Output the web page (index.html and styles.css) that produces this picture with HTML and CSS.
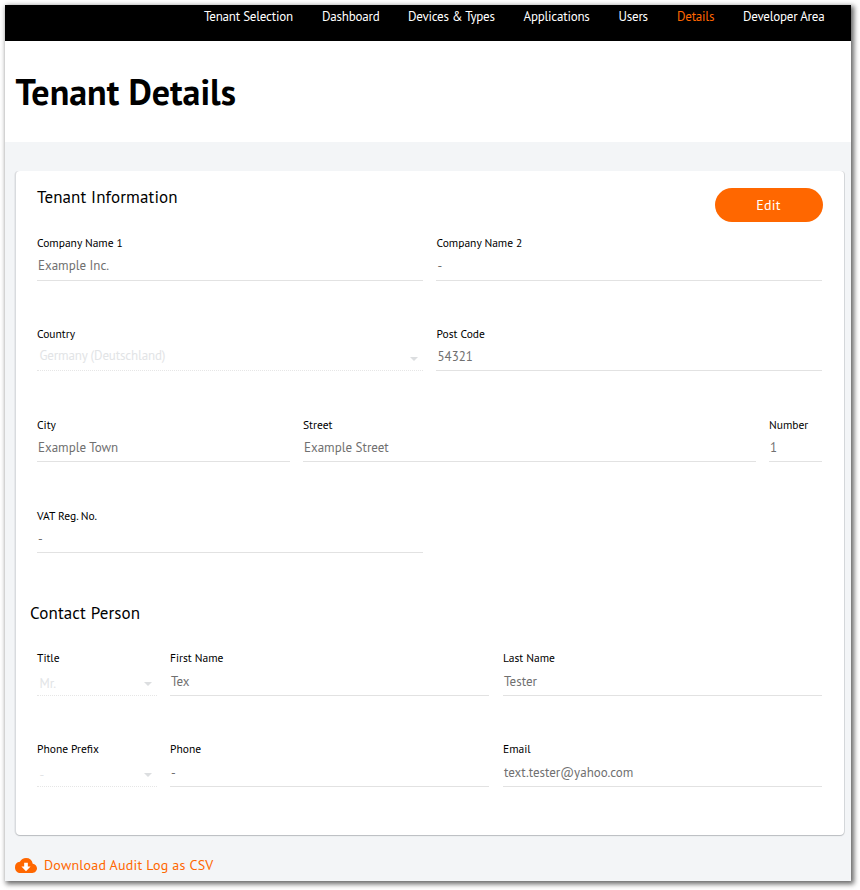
FILE: index.html
```html
<!DOCTYPE html>
<html lang="en">
<head>
<meta charset="utf-8">
<title>Tenant Details</title>
<link rel="stylesheet" href="styles.css">
</head>
<body>
<div class="window">
  <nav class="nav">
    <a>Tenant Selection</a><a>Dashboard</a><a>Devices &amp; Types</a><a>Applications</a><a>Users</a><a class="active">Details</a><a>Developer Area</a>
  </nav>
  <header class="hero"><h1>Tenant Details</h1></header>
  <main class="content">
    <section class="card">
      <div class="card-head"><h2>Tenant Information</h2><button class="edit">Edit</button></div>
      <div class="row halves first">
        <div class="field"><label>Company Name 1</label><div class="value">Example Inc.</div></div>
        <div class="field"><label>Company Name 2</label><div class="value">-</div></div>
      </div>
      <div class="row halves">
        <div class="field"><label>Country</label><div class="value select">Germany (Deutschland)</div></div>
        <div class="field"><label>Post Code</label><div class="value">54321</div></div>
      </div>
      <div class="row address">
        <div class="field"><label>City</label><div class="value">Example Town</div></div>
        <div class="field"><label>Street</label><div class="value">Example Street</div></div>
        <div class="field"><label>Number</label><div class="value">1</div></div>
      </div>
      <div class="row halves">
        <div class="field"><label>VAT Reg. No.</label><div class="value">-</div></div>
      </div>
      <h2 class="contact-title">Contact Person</h2>
      <div class="row contact">
        <div class="field"><label>Title</label><div class="value select">Mr.</div></div>
        <div class="field"><label>First Name</label><div class="value">Tex</div></div>
        <div class="field"><label>Last Name</label><div class="value">Tester</div></div>
      </div>
      <div class="row contact">
        <div class="field"><label>Phone Prefix</label><div class="value select">-</div></div>
        <div class="field"><label>Phone</label><div class="value">-</div></div>
        <div class="field"><label>Email</label><div class="value">text.tester@yahoo.com</div></div>
      </div>
    </section>
    <a class="download">
      <svg viewBox="0 0 24 16" width="22" height="15" preserveAspectRatio="none"><path fill="#ff6700" d="M19.35 6.04A7.49 7.49 0 0 0 12 0C9.11 0 6.6 1.64 5.35 4.04A5.994 5.994 0 0 0 0 10c0 3.31 2.69 6 6 6h13c2.76 0 5-2.24 5-5 0-2.64-2.05-4.78-4.65-4.96z"/><path fill="#fff" d="M17 9l-5 5-5-5h3V5h4v4z"/></svg>
      <span>Download Audit Log as CSV</span>
    </a>
  </main>
</div>
</body>
</html>
```
FILE: styles.css
```css
* { box-sizing: border-box; }
body {
  margin: 0;
  padding: 5px 9px 9px 5px;
  background: #fff;
  font-family: "PT Sans", "Open Sans", "Noto Sans", sans-serif;
  color: #000;
}
.window {
  height: 876px;
  background: #f3f5f7;
  box-shadow: 2px 2px 5px 1px rgba(0, 0, 0, .6);
}
.nav {
  display: grid;
  grid-template-columns: 118px 86px 115.5px 95px 58.5px 66px 82px;
  height: 36px;
  padding-left: 199px;
  background: #000;
  color: #fff;
  font-size: 13px;
  letter-spacing: -.22px;
  line-height: 24px;
  white-space: nowrap;
}
.nav .active { color: #ff6700; }
.hero {
  height: 101px;
  padding: 27px 10px 0 10.5px;
  background: #fff;
}
h1 { margin: 0; font-size: 36px; line-height: 48px; font-weight: 700; }
h2 { margin: 0; font-size: 17px; line-height: 24px; font-weight: 400; letter-spacing: .12px; }
.content { padding: 29px 7px 0 11px; }
.card {
  height: 664px;
  padding: 14px 22px 0 21px;
  background: #fff;
  border-radius: 4px;
  box-shadow: 0 1px 1px #b9bcbf, -1.5px 0 0 #dcdee1, 1px 0 0 #d8dadd;
}
.card-head { display: flex; justify-content: space-between; height: 50px; }
.edit {
  width: 108px;
  height: 34px;
  margin: 3px -1px 0 0;
  padding: 0 1px 0 0;
  border: 0;
  border-radius: 17px;
  background: #ff6700;
  color: #fff;
  font: inherit;
  font-size: 14px;
  letter-spacing: .3px;
}
.row { display: grid; column-gap: 13px; height: 91px; }
.row.first { height: 90px; }
.halves { grid-template-columns: 386px 386px; }
.address { grid-template-columns: 253px 453px 53px; }
.contact { grid-template-columns: 120px 320px 319px; }
.contact .field:nth-child(2) { margin-right: 1px; }
.field { height: 46px; }
label {
  display: block;
  height: 16px;
  font-size: 11.5px;
  line-height: 18px;
}
.halves .field:nth-child(2) label { padding-left: .5px; }
.first label,
.contact label { line-height: 16px; }
.value {
  position: relative;
  height: 30px;
  padding-left: 1px;
  border-bottom: 1px solid #e2e2e2;
  color: #707070;
  font-size: 13px;
  line-height: 32px;
}
.halves .field:nth-child(2) .value { padding-left: 1.5px; }
.first .value { line-height: 30px; }
.contact .value { line-height: 32px; }
.value.select {
  padding-left: 2.5px;
  border-bottom: 1px dotted #e6e6e6;
  color: #e2e4e6;
  letter-spacing: -.14px;
  line-height: 30px;
}
.contact .value.select { line-height: 35px; }
.select::after {
  content: "";
  position: absolute;
  right: 5px;
  top: 16px;
  border: 4px solid transparent;
  border-top-color: #dcdee0;
  border-bottom: 0;
}
.contact-title { height: 50px; margin: 2px 0 0 -7px; line-height: 26px; }
.download {
  display: flex;
  align-items: center;
  gap: 7px;
  margin: 20px 0 0 -1px;
  height: 20px;
  color: #ff6700;
  font-size: 14px;
  letter-spacing: .2px;
}
```
